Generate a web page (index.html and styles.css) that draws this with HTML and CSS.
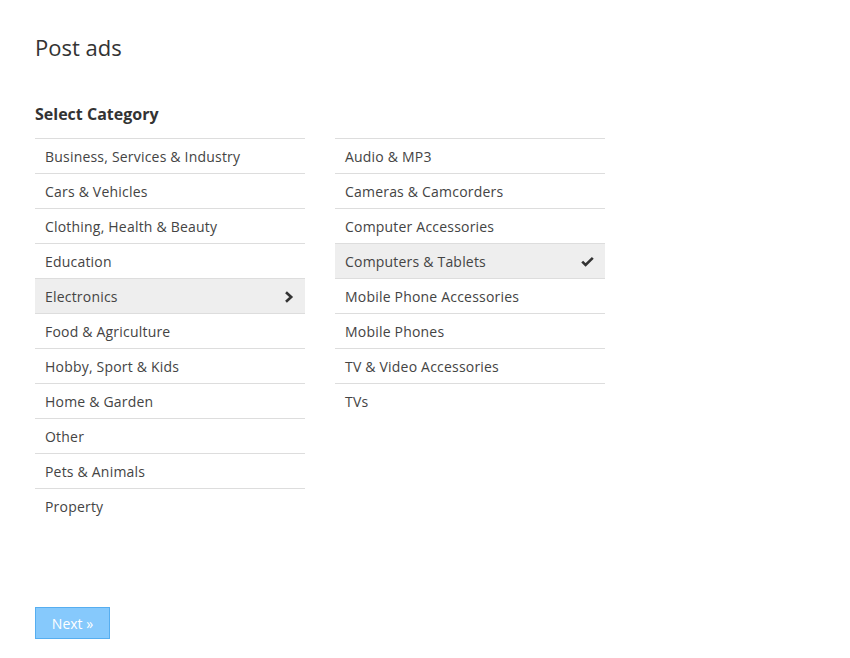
FILE: index.html
```html
<!DOCTYPE html>
<html>
<head>
<meta charset="utf-8">
<link rel="stylesheet" href="styles.css">
</head>
<body>
<div class="page">
  <h1 class="title">Post ads</h1>
  <h2 class="subtitle">Select Category</h2>
  <div class="columns">
    <ul class="list">
      <li class="item">Business, Services &amp; Industry</li>
      <li class="item">Cars &amp; Vehicles</li>
      <li class="item">Clothing, Health &amp; Beauty</li>
      <li class="item">Education</li>
      <li class="item active">Electronics
        <svg class="icon" width="10" height="12" viewBox="0 0 10 12"><path d="M2 1.2 L7.2 6 L2 10.8" fill="none" stroke="#333" stroke-width="2.6"/></svg>
      </li>
      <li class="item">Food &amp; Agriculture</li>
      <li class="item">Hobby, Sport &amp; Kids</li>
      <li class="item">Home &amp; Garden</li>
      <li class="item">Other</li>
      <li class="item">Pets &amp; Animals</li>
      <li class="item">Property</li>
    </ul>
    <ul class="list">
      <li class="item">Audio &amp; MP3</li>
      <li class="item">Cameras &amp; Camcorders</li>
      <li class="item">Computer Accessories</li>
      <li class="item active">Computers &amp; Tablets
        <svg class="icon" width="13" height="11" viewBox="0 0 13 11"><path d="M1.2 5.6 L4.6 9 L11.8 1.8" fill="none" stroke="#333" stroke-width="2.6"/></svg>
      </li>
      <li class="item">Mobile Phone Accessories</li>
      <li class="item">Mobile Phones</li>
      <li class="item">TV &amp; Video Accessories</li>
      <li class="item">TVs</li>
    </ul>
  </div>
  <button class="next" type="button">Next &raquo;</button>
</div>
</body>
</html>
```
FILE: styles.css
```css
html, body {
  margin: 0;
  padding: 0;
  background: #fff;
}
body {
  font-family: "Open Sans", "Liberation Sans", sans-serif;
  color: #444;
  font-size: 14px;
}
.page {
  padding: 34px 35px 0 35px;
}
.title {
  margin: 0;
  font-size: 22px;
  font-weight: 400;
  line-height: 26px;
  color: #333;
}
.subtitle {
  margin: 43px 0 13px 0;
  font-size: 16px;
  font-weight: 700;
  line-height: 22px;
  color: #333;
}
.columns {
  display: flex;
  gap: 30px;
  align-items: flex-start;
}
.list {
  list-style: none;
  margin: 0;
  padding: 0;
  width: 270px;
}
.item {
  display: flex;
  align-items: center;
  justify-content: space-between;
  height: 33px;
  border-top: 1px solid #ddd;
  padding: 1px 11px 0 10px;
  line-height: 20px;
  letter-spacing: 0.2px;
  color: #444;
}
.item.active {
  background: #eee;
}
.icon {
  display: block;
}
.next {
  margin-top: 84px;
  display: block;
  width: 75px;
  height: 32px;
  padding: 0;
  font-family: "Open Sans", "Liberation Sans", sans-serif;
  font-size: 14px;
  color: #fff;
  background: #86c9fc;
  border: 1px solid #56aef0;
  border-radius: 0;
}
```
